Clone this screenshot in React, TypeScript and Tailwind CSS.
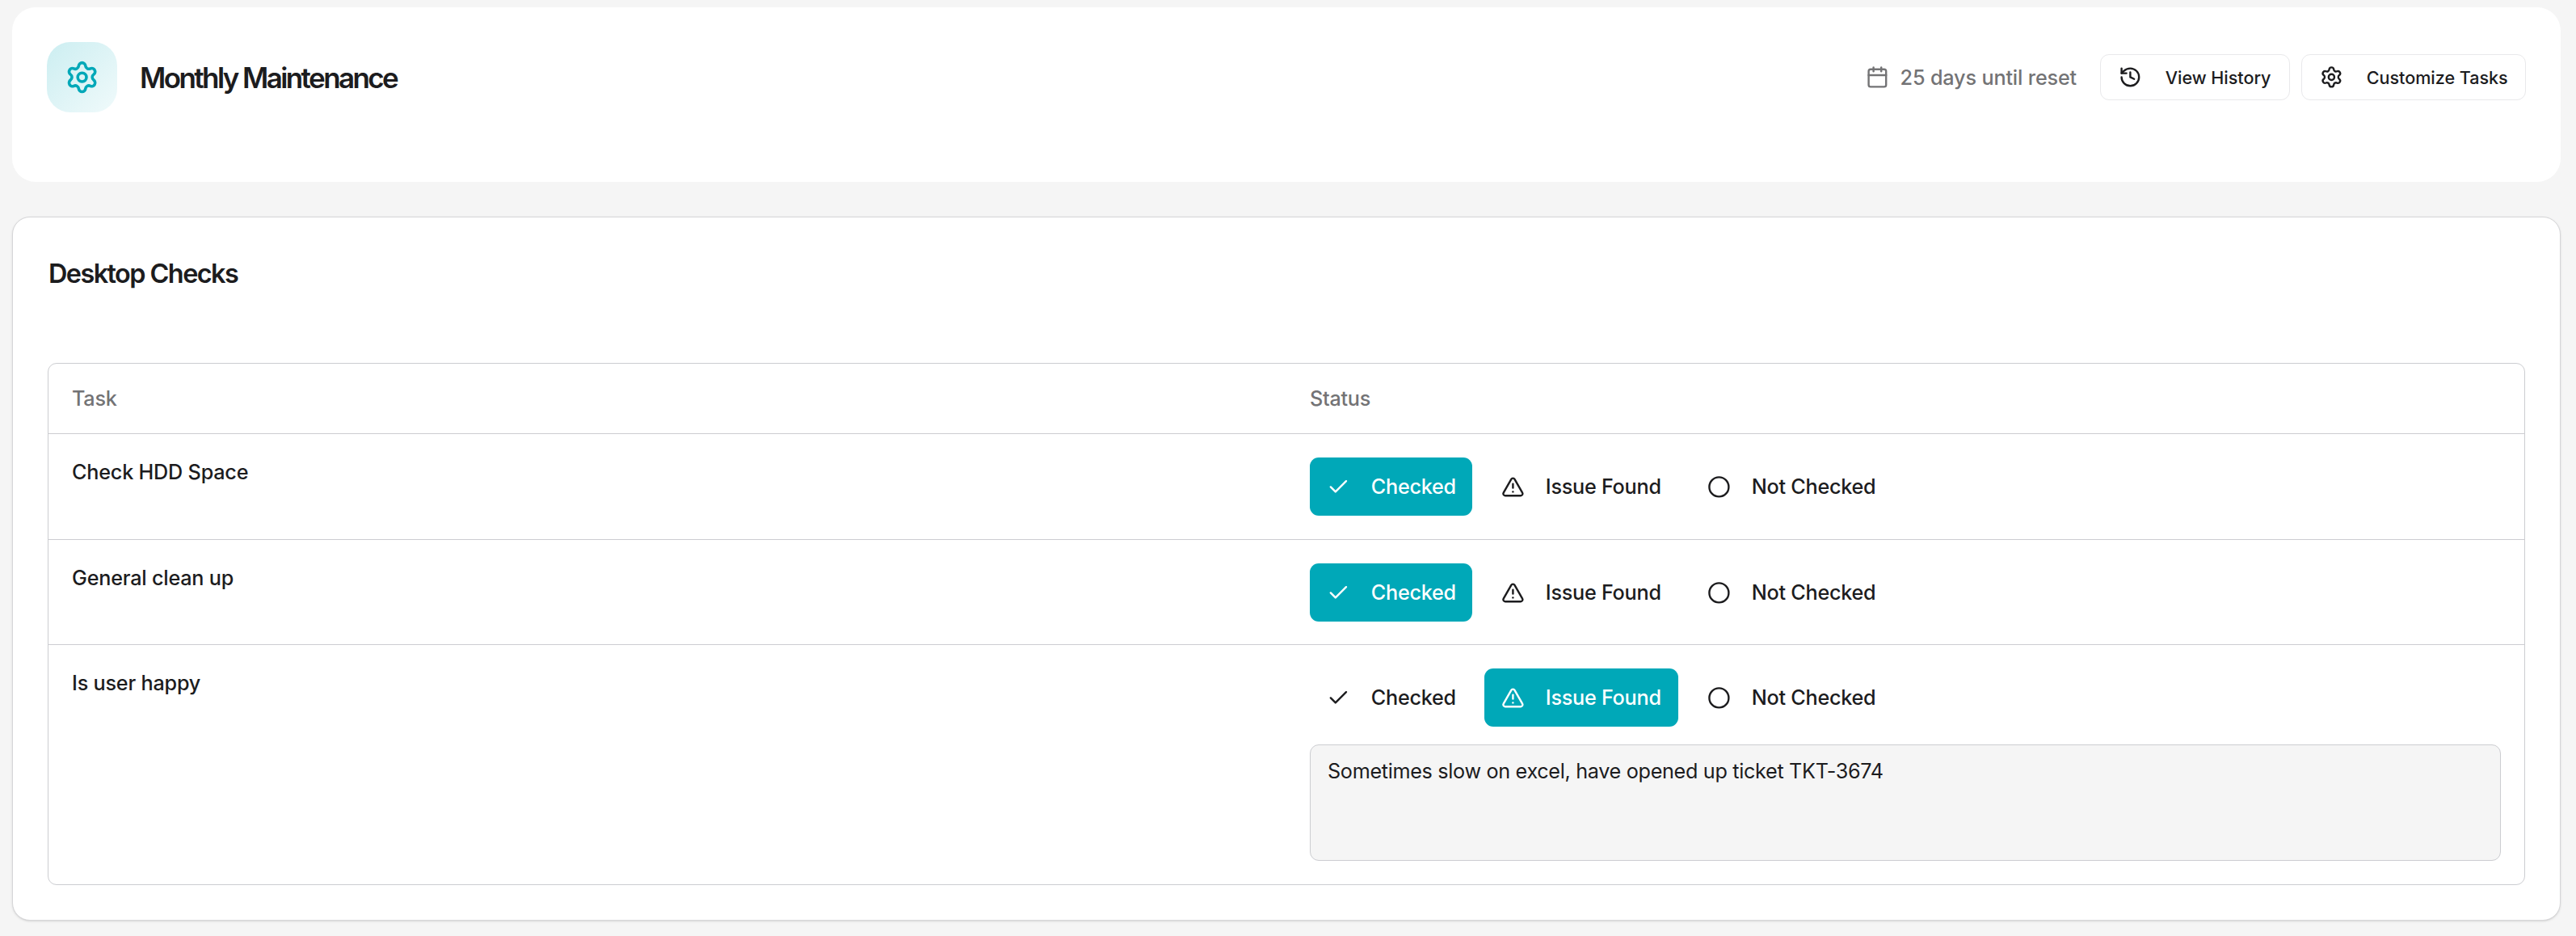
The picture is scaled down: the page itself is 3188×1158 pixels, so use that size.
import { useState } from "react";
import { Calendar, Check, Circle, History, Settings, TriangleAlert } from "lucide-react";
import type { LucideIcon } from "lucide-react";
import clsx from "clsx";

type Status = "checked" | "issue" | "unchecked";

type Task = {
    name: string;
    status: Status;
    note?: string;
}

const statusOptions: { value: Status; label: string; icon: LucideIcon; width: string }[] = [
    { value: "checked", label: "Checked", icon: Check, width: "w-[201px]" },
    { value: "issue", label: "Issue Found", icon: TriangleAlert, width: "w-[240px]" },
    { value: "unchecked", label: "Not Checked", icon: Circle, width: "w-[252px]" },
];

const initialTasks: Task[] = [
    { name: "Check HDD Space", status: "checked" },
    { name: "General clean up", status: "checked" },
    { name: "Is user happy", status: "issue", note: "Sometimes slow on excel, have opened up ticket TKT-3674" },
];

const HeaderButton = ({ icon: Icon, label, width }: { icon: LucideIcon; label: string; width: string }) => (
    <button className={clsx("flex h-[57px] items-center rounded-[11px] border border-[#e9e9eb] bg-white pl-[22px] text-[21.6px] font-medium tracking-[-0.002em] whitespace-nowrap", width)}>
        <Icon className="mr-[29px] size-[28.8px] shrink-0" />
        {label}
    </button>
);

const StatusButtons = ({ status, onChange }: { status: Status; onChange: (s: Status) => void }) => (
    <div className="flex gap-[15px]">
        {statusOptions.map(({ value, label, icon: Icon, width }) => (
            <button
                key={value}
                onClick={() => onChange(value)}
                className={clsx(
                    "flex h-[72px] items-center rounded-[11px] pl-[21px] font-medium tracking-[-0.01em] whitespace-nowrap",
                    width,
                    status === value && "bg-[#00a8b8] text-white"
                )}
            >
                <Icon className="mr-[26px] size-[28.8px] shrink-0" />
                {label}
            </button>
        ))}
    </div>
);

const App = () => {

    const [tasks, setTasks] = useState<Task[]>(initialTasks);

    const setStatus = (index: number, status: Status) => {
        setTasks(tasks.map((task, i) => (i === index ? { ...task, status } : task)));
    }

    return (
        <div className="min-h-screen bg-[#f5f5f5] pt-[9px] pr-[19px] pb-[19px] pl-[15px] font-['Inter',sans-serif] text-[25.2px] leading-[36px] text-[#1c1c1e]">

            <header className="flex h-[216px] items-start justify-between rounded-[29px] bg-white p-[43px]">
                <div className="flex items-center">
                    <div className="mr-[28px] flex size-[87px] items-center justify-center rounded-[29px] bg-linear-to-br from-[#cceef1] to-[#f0fafb] text-[#00a8b8]">
                        <Settings className="size-[43.2px]" />
                    </div>
                    <h1 className="text-[35px] font-semibold tracking-[-0.074em]">Monthly Maintenance</h1>
                </div>

                <div className="flex h-[87px] items-center">
                    <div className="mr-[29px] flex items-center gap-[14px] font-medium tracking-[-0.006em] text-[#737375]">
                        <Calendar className="size-[28.8px]" />
                        <span>25 days until reset</span>
                    </div>
                    <div className="flex gap-[14px]">
                        <HeaderButton icon={History} label="View History" width="w-[235px]" />
                        <HeaderButton icon={Settings} label="Customize Tasks" width="w-[278px]" />
                    </div>
                </div>
            </header>

            <section className="mt-[43px] h-[871px] rounded-[22px] border border-[#d6d6d8] bg-white px-[43px] pt-[50px] shadow-sm">
                <h2 className="pl-px text-[32.4px] leading-[40px] font-semibold tracking-[-0.048em]">Desktop Checks</h2>

                <div className="mt-[90px] rounded-[11px] border border-[#cccdd1]">
                    <div className="grid h-[87px] grid-cols-2 items-center border-b border-[#cccdd1] font-medium tracking-[-0.01em] text-[#737375]">
                        <div className="px-[29px]">Task</div>
                        <div className="px-[29px]">Status</div>
                    </div>
                    {tasks.map((task, index) => (
                        <div
                            key={task.name}
                            className={clsx(
                                "grid grid-cols-2",
                                index < tasks.length - 1 && "border-b border-[#cccdd1]",
                                index === 0 ? "h-[131px]" : index === 1 ? "h-[130px]" : "h-[296px]"
                            )}
                        >
                            <div className="px-[29px] pt-[29px] font-medium tracking-[-0.008em]">{task.name}</div>
                            <div className="px-[29px] pt-[29px]">
                                <StatusButtons status={task.status} onChange={(s) => setStatus(index, s)} />
                                {task.status === "issue" && (
                                    <textarea
                                        className="mt-[22px] block h-[144px] w-full resize-none rounded-[11px] border border-[#cccdd1] bg-[#f5f5f5] px-[21px] py-[14px] tracking-[-0.0125em] outline-none"
                                        defaultValue={task.note}
                                    />
                                )}
                            </div>
                        </div>
                    ))}
                </div>
            </section>
        </div>
    );
}

export default App;
